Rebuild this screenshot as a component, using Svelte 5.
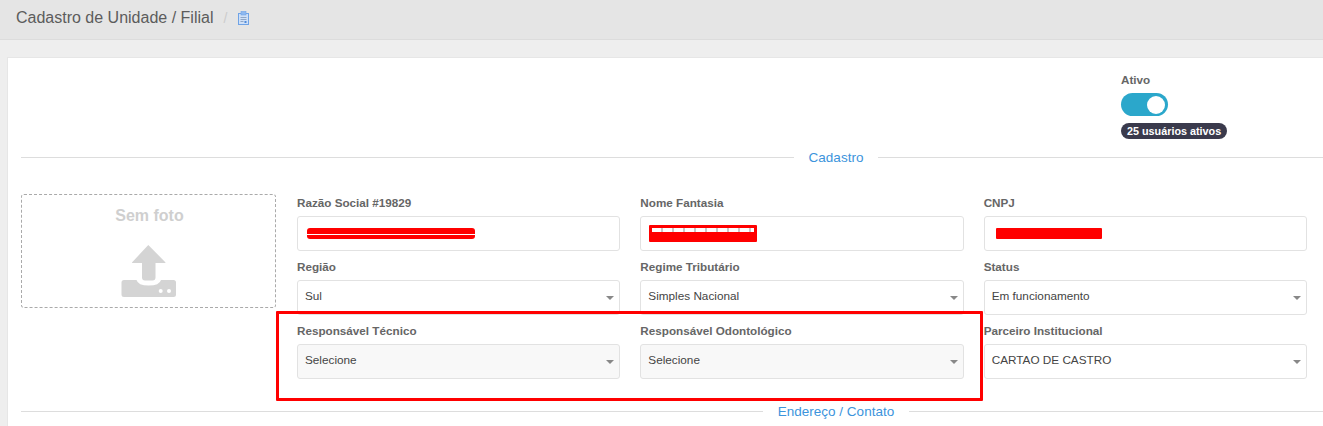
<script>
  const fields = [
    { label: 'Razão Social #19829', mark: 'a' },
    { label: 'Nome Fantasia', mark: 'b' },
    { label: 'CNPJ', mark: 'c' },
    { label: 'Região', value: 'Sul' },
    { label: 'Regime Tributário', value: 'Simples Nacional' },
    { label: 'Status', value: 'Em funcionamento' },
    { label: 'Responsável Técnico', value: 'Selecione', readonly: true },
    { label: 'Responsável Odontológico', value: 'Selecione', readonly: true },
    { label: 'Parceiro Institucional', value: 'CARTAO DE CASTRO' }
  ]
</script>

<div class="page">
  <header class="topbar">
    <span class="crumb">Cadastro de Unidade / Filial</span>
    <span class="sep">/</span>
    <svg class="crumb-icon" width="11" height="14" viewBox="0 0 11 14">
      <rect x="0.5" y="2.5" width="10" height="11" fill="#cfe0f7" stroke="#6fa3e6" />
      <rect x="3" y="0.500" width="5" height="3.500" fill="#8db8f0" stroke="#6fa3e6" stroke-width="0.600" />
      <path d="M2.500 6.500h6M2.500 8.500h6M2.500 10.500h3" stroke="#8ea6c6" />
      <rect x="6.500" y="10" width="2" height="2" fill="#4f8ada" />
    </svg>
  </header>

  <main class="card">
    <div class="active-row">
      <div class="active">
        <span class="active-label">Ativo</span>
        <span class="toggle"><span class="knob"></span></span>
        <span class="badge">25 usuários ativos</span>
      </div>
    </div>

    <div class="divider first"><span>Cadastro</span></div>

    <div class="form">
      <div class="photo">
        <span class="photo-title">Sem foto</span>
        <svg class="photo-icon" width="56" height="54" viewBox="0 0 56 54">
          <path d="M27.300 1 44.300 18.200Q44.800 19 44 19H34.500V33.500Q34.500 36.500 31.500 36.500H24Q21 36.500 21 33.500V19H11.500Q10.700 19 11.200 18.200Z" fill="#d4d4d4" />
          <path d="M3 36H15.500Q17 41.500 27.700 41.500 38.500 41.500 40 36H52.500Q55 36 55 38.500V50.500Q55 53 52.500 53H3Q.5 53 .5 50.500V38.500Q.5 36 3 36Z" fill="#d4d4d4" />
          <circle cx="39.700" cy="47" r="2" fill="#fff" />
          <circle cx="48" cy="47" r="2" fill="#fff" />
        </svg>
      </div>

      <div class="fields">
        {#each fields as field}
          <div class="field">
            <span class="label">{field.label}</span>
            {#if field.mark}
              <div class="control">
                <span class="mark mark-{field.mark}">
                  {#if field.mark === 'b'}<span class="mark-gap"></span>{/if}
                </span>
              </div>
            {:else}
              <div class="control select" class:readonly={field.readonly}>
                {field.value}
                <span class="arrow"></span>
              </div>
            {/if}
          </div>
        {/each}
      </div>
    </div>

    <div class="divider second"><span>Endereço / Contato</span></div>
  </main>

  <div class="highlight"></div>
</div>

<style>
  :global(body) {
    margin: 0;
    overflow: hidden;
    background: #eeeeee;
    font-family: "Liberation Sans", Arial, sans-serif;
  }

  .page {
    position: relative;
    width: 1323px;
    height: 426px;
    overflow: hidden;
    background: #eeeeee;
  }

  .topbar {
    display: flex;
    align-items: center;
    height: 36px;
    padding: 0 0 3px 16px;
    background: #e5e5e5;
    border-bottom: 1px solid #dcdcdc;
    color: #5c5c5c;
    font-size: 16px;
  }

  .sep {
    margin-left: 10px;
    color: #cccccc;
    font-size: 14px;
  }

  .crumb-icon {
    margin-left: 11px;
  }

  .card {
    margin: 17px 0 0 7px;
    padding: 0 16px 0 13px;
    height: 369px;
    background: #ffffff;
    border-top: 1px solid #e6e6e6;
    border-left: 1px solid #e6e6e6;
  }

  .active-row {
    display: flex;
    justify-content: flex-end;
    padding-top: 15px;
  }

  .active {
    display: flex;
    flex-direction: column;
    align-items: flex-start;
    width: 186px;
  }

  .active-label {
    height: 20px;
    line-height: 14px;
    color: #666666;
    font-size: 11.700px;
    font-weight: 700;
  }

  .toggle {
    display: flex;
    align-items: center;
    justify-content: flex-end;
    width: 47px;
    height: 23px;
    padding-right: 3px;
    box-sizing: border-box;
    border-radius: 12px;
    background: #2ba7cb;
  }

  .knob {
    width: 18px;
    height: 18px;
    border-radius: 50%;
    background: #ffffff;
  }

  .badge {
    margin-top: 7px;
    padding: 0 6px;
    height: 16px;
    line-height: 16px;
    border-radius: 8px;
    background: #3a3a4c;
    color: #ffffff;
    font-size: 10.800px;
    font-weight: 700;
    white-space: nowrap;
  }

  .divider {
    display: grid;
    grid-template-columns: 1fr auto 1fr;
    align-items: center;
    column-gap: 15px;
    width: 1630px;
    color: #3c94dc;
    font-size: 13.500px;
  }

  .divider::before,
  .divider::after {
    content: "";
    height: 1px;
    background: #dddddd;
  }

  .divider.first {
    margin-top: 11px;
  }

  .divider.second {
    margin-top: 25px;
  }

  .form {
    display: grid;
    grid-template-columns: 255px 1fr;
    column-gap: 21px;
    margin-top: 29px;
  }

  .photo {
    display: flex;
    flex-direction: column;
    align-items: center;
    height: 114px;
    box-sizing: border-box;
    border: 1px dashed #aaaaaa;
    border-radius: 3px;
  }

  .photo-title {
    margin: 12px 0 0 2px;
    color: #cfcfcf;
    font-size: 16px;
    font-weight: 700;
    line-height: 18px;
  }

  .photo-icon {
    margin-top: 19px;
  }

  .fields {
    display: grid;
    grid-template-columns: repeat(3, 1fr);
    column-gap: 20px;
    row-gap: 7px;
  }

  .field {
    display: flex;
    flex-direction: column;
  }

  .label {
    height: 22px;
    line-height: 17px;
    color: #666666;
    font-size: 11.700px;
    font-weight: 700;
  }

  .control {
    display: flex;
    align-items: center;
    position: relative;
    height: 35px;
    padding: 0 0 4px 7px;
    box-sizing: border-box;
    border: 1px solid #e2e2e2;
    border-radius: 3px;
    background: #ffffff;
    color: #444444;
    font-size: 11.750px;
  }

  .readonly {
    background: #f8f8f8;
  }

  .arrow {
    position: absolute;
    right: 5px;
    top: 15px;
    border-top: 4px solid #888888;
    border-left: 4px solid transparent;
    border-right: 4px solid transparent;
  }

  .mark {
    display: block;
    background: #ff0000;
    border-radius: 1px;
  }

  .mark-a {
    width: 168px;
    height: 11px;
    margin: 4px 0 0 2px;
    border-radius: 3px;
    background: linear-gradient(#ff0000 0 6px, #ffffff 6px 7px, #ff0000 7px);
  }

  .mark-b {
    display: flex;
    justify-content: center;
    width: 108px;
    height: 17px;
    margin: 3px 0 0 1px;
  }

  .mark-gap {
    width: 102px;
    height: 4px;
    margin-top: 3px;
    background: repeating-linear-gradient(90deg, #ffffff 0 9px, #c9c9c9 9px 11px);
  }

  .mark-c {
    width: 106px;
    height: 11px;
    margin: 4px 0 0 4px;
  }

  .highlight {
    position: absolute;
    left: 276px;
    top: 311px;
    width: 707px;
    height: 90px;
    box-sizing: border-box;
    border: 3px solid #ff0000;
    border-radius: 1px;
  }
</style>
